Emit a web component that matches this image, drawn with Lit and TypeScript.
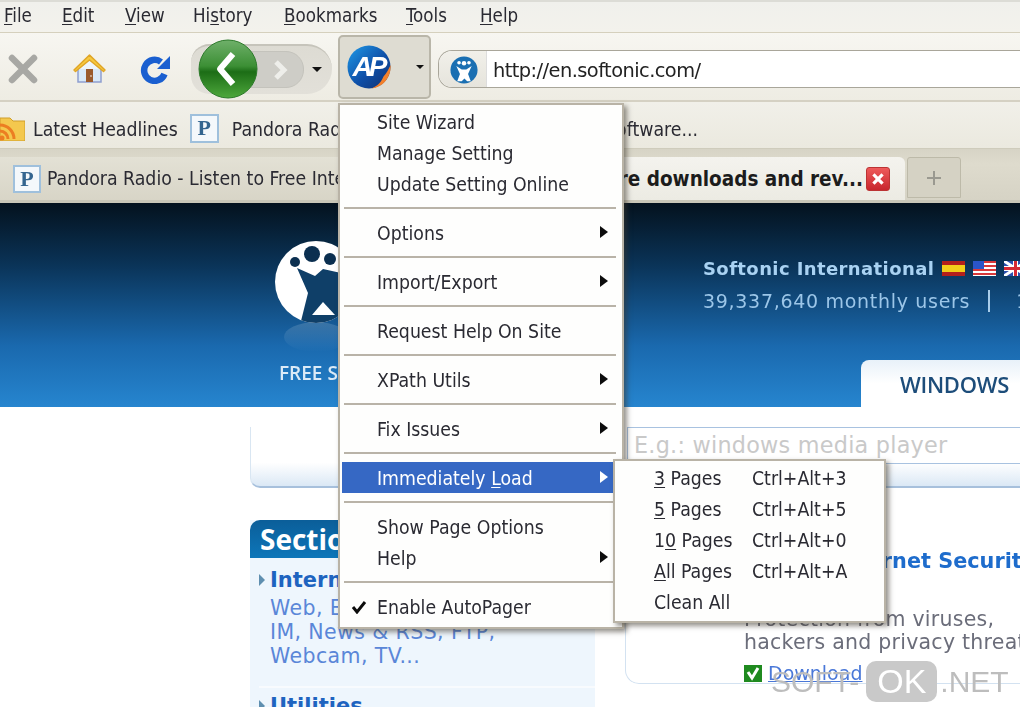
import { LitElement, html, css, svg } from "lit";
import { customElement } from "lit/decorators.js";

const pIcon = (s: number) => html`<span class="p" style="width:${s}px;height:${s}px">P</span>`;
const items: any[] = [
  ["Site Wizard"], ["Manage Setting"], ["Update Setting Online"], "-",
  ["Options", 1], "-", ["Import/Export", 1], "-", ["Request Help On Site"], "-",
  ["XPath Utils", 1], "-", ["Fix Issues", 1], "-",
  ["Immediately Load", 1, "hi"], "-", ["Show Page Options"], ["Help", 1], "-", ["Enable AutoPager", 0, "chk"],
];

@customElement("app-root")
export class AppRoot extends LitElement {
  static styles = css`
    :host { display: block; width: 1020px; height: 707px; overflow: hidden; background: #fff; }
    .shell { position: relative; width: 1020px; height: 707px; overflow: hidden; filter: blur(0.45px);
      font-family: "DejaVu Sans", sans-serif; font-stretch: condensed; font-size: 19.3px; color: #2a2a32; }
    u { text-underline-offset: 2px; }
    .menubar { height: 33px; box-sizing: border-box; border-top: 2px solid #dcdcd6; border-bottom: 1px solid #d5d0bd; font-size: 18.6px; padding: 0 0 3px 4px;
      background: linear-gradient(#f0f0ec, #f3f2ec); display: flex; align-items: center; }
    .nav { height: 69px; box-sizing: border-box; padding-top: 4px; background: linear-gradient(#f7f6f1, #eeece3); border-bottom: 2px solid #d5d1c3;
      display: flex; align-items: center; position: relative; }
    .ticon { flex: none; display: block; }
    .capsule { margin-left: 19px; width: 141px; height: 50px; box-sizing: border-box; border-top: 2px solid #c6c4bb; border-radius: 22px 30px 30px 22px; background: linear-gradient(#dddbd3, #e2e0d9);
      display: flex; align-items: center; position: relative; flex: none; }
    .back { margin-left: 7px; margin-top: -2px; flex: none; position: relative; z-index: 1; }
    .fwd { width: 54px; height: 37px; margin-left: -8px; border-radius: 0 18px 18px 0; background: #cecdc7; border: 1px solid #c4c3bc; box-sizing: border-box;
      display: flex; align-items: center; justify-content: center; padding-left: 6px; flex: none; }
    .drop { width: 0; height: 0; border-left: 5px solid transparent; border-right: 5px solid transparent; border-top: 5px solid #111; flex: none; }
    .capsule .drop { margin-left: 8px; }
    .ap { margin-left: 6px; width: 93px; height: 64px; box-sizing: border-box; flex: none; background: #dedcd2; border: 2px solid #b9b6a9; border-radius: 5px;
      display: flex; align-items: center; padding-left: 7px; margin-top: -4px; }
    .ap .drop { margin-left: 25px; border-left-width: 4px; border-right-width: 4px; border-top-width: 4px; }
    .url { margin-left: 7px; flex: 1; height: 38px; box-sizing: border-box; border: 1.5px solid #a9a69a; border-right: none; border-radius: 14px 0 0 14px; background: #fff;
      display: flex; align-items: center; overflow: hidden; }
    .ident { width: 48px; height: 100%; background: linear-gradient(#f1f0ea, #e6e4dc); display: flex; align-items: center; justify-content: flex-end; padding: 2px 7px 0 0; box-sizing: border-box; flex: none; border-right: 1px solid #ddd; }
    .urltext { margin-left: 6px; padding-top: 3px; font-stretch: normal; font-size: 19.4px; color: #222; letter-spacing: -0.55px; }
    .bm { height: 47px; box-sizing: border-box; padding-top: 6px; background: linear-gradient(#f1f0e9, #ebe9df); display: flex; align-items: center; border-bottom: 1px solid #cfccbc; }
    .bm .t1, .bm .t2, .bm .t3 { padding-top: 2px; }
    .bm .t1 { margin-left: 8px; }
    .bm .pi { margin-left: 12px; display: flex; }
    .bm .t2 { margin-left: 13px; }
    .bm .t3 { margin-left: auto; margin-right: 322px; }
    .p { display: inline-flex; align-items: center; justify-content: center; box-sizing: border-box; background: #f4f8fb; border: 2px solid #9fc0dc; color: #34658f;
      font-family: "Liberation Serif", serif; font-weight: bold; font-size: 22px; flex: none; }
    .tabs { height: 54px; box-sizing: border-box; background: linear-gradient(#d7d4c6, #dedbcd 30%, #d6d3c5); border-bottom: 3px solid #cac7b8; display: flex; align-items: flex-end; }
    .tab1 { width: 470px; height: 43px; box-sizing: border-box; padding: 0 0 0 13px; display: flex; align-items: center; gap: 6px; white-space: nowrap; overflow: hidden; background: linear-gradient(#e3e1d5, #d8d5c7); }
    .tab2 { width: 435px; height: 43px; box-sizing: border-box; display: flex; align-items: center; justify-content: flex-end; gap: 3px; padding: 0 15px 0 0; background: linear-gradient(#f4f3ee, #ecebe3); border-radius: 6px 6px 0 0; font-weight: bold; font-size: 20.5px; white-space: nowrap; color: #1c1c1c; }
    .x { width: 24px; height: 24px; border-radius: 3px; background: linear-gradient(#ee5a5a, #c8262e); border: 1px solid #b33; box-sizing: border-box; flex: none; display: block; }
    .tab3 { width: 54px; height: 41px; margin: 0 0 2px 2px; box-sizing: border-box; background: #d5d2c4; border: 1px solid #bdbaa9; border-radius: 3px 3px 0 0; display: flex; align-items: center; justify-content: center; }

    .hdr { height: 204px; background: linear-gradient(#04121e 0%, #0a3357 30%, #1a69ae 70%, #2685cf 100%); display: flex; font-stretch: normal; position: relative; }
    .logo { margin-left: 275px; width: 428px; flex: none; padding-top: 38px; box-sizing: border-box; }
    .logo svg { display: block; }
    .free { margin: 9px 0 0 4px; color: #dbeaf7; font-family: "Open Sans", sans-serif; font-weight: 600; font-size: 19px; white-space: nowrap; }
    .right { flex: 1; padding-top: 55px; display: flex; flex-direction: column; overflow: hidden; }
    .intl { color: #a9d2f2; font-weight: bold; font-size: 18px; letter-spacing: .4px; white-space: nowrap; display: flex; align-items: center; }
    .flag { display: block; flex: none; margin-left: 8px; }
    .users { margin-top: 11px; color: #9cc6e8; font-size: 19px; letter-spacing: .7px; white-space: nowrap; display: flex; align-items: center; }
    .bar { width: 2px; height: 22px; background: #a9cdea; margin: 0 26px 0 18px; flex: none; }
    .wintab { margin: auto 0 0 158px; height: 47px; flex: none; background: linear-gradient(#e8f1f9, #fff 50%); border-radius: 8px 0 0 0; padding: 9px 0 0 39px; box-sizing: border-box; color: #1d4d7a; font-size: 22px; font-family: "Open Sans", sans-serif; font-weight: 600; white-space: nowrap; letter-spacing: -.3px; }

    .search { margin: 20px 0 0 250px; height: 61px; border-radius: 0 0 0 10px; border-bottom: 2px solid #a7c0dc; border-left: 1px solid #d9e6f2; box-sizing: border-box;
      background: linear-gradient(#fff 60%, #dbe8f5); position: relative; display: flex; justify-content: flex-end; }
    .input { width: 393px; height: 37px; border: 1px solid #a8c2e0; border-right: none; box-sizing: border-box; background: #fff; color: #c9c9c9; padding-left: 6px; font-stretch: normal; font-size: 22.3px; line-height: 35px; white-space: nowrap; letter-spacing: .25px; }
    .bottom { display: flex; margin-left: 250px; font-stretch: normal; }
    .sec { margin-top: 32px; width: 345px; height: 200px; flex: none; background: #eef6fd; }
    .sechd { height: 38px; width: 120px; background: linear-gradient(#0b5e99, #0d76b9); border-radius: 10px 0 0 0; color: #fff; font-weight: bold; font-size: 28px; padding-left: 10px; box-sizing: border-box; line-height: 38px; font-family: "Open Sans", sans-serif; }
    .sect { padding: 10px 0 0 9px; }
    .st { display: flex; align-items: center; gap: 5px; color: #1e64c0; font-weight: bold; font-size: 21px; }
    .st i { width: 0; height: 0; border-left: 6px solid #5f8fb0; border-top: 6px solid transparent; border-bottom: 6px solid transparent; }
    .sl { color: #5a86d8; font-size: 20.5px; letter-spacing: .4px; line-height: 24px; margin: 4px 0 0 11px; white-space: nowrap; }
    .sep2 { height: 2px; background: #f8fbfe; margin: 18px 0 6px; }
    .card { margin: 0 0 0 30px; flex: 1; height: 196px; border: 1px solid #d3e2f1; border-top: none; border-right: none; border-radius: 0 0 0 14px; padding: 60px 0 0 118px; box-sizing: border-box; white-space: nowrap; overflow: hidden; }
    .ct { color: #1e6ccc; font-weight: bold; font-size: 20.8px; line-height: 27px; margin-left: 3px; }
    .cd { color: #6b6d7a; font-size: 20.5px; letter-spacing: .25px; line-height: 23px; margin-top: 33px; }
    .dl { display: flex; align-items: center; gap: 6px; margin-top: 8px; }
    .dl a { color: #4a78d8; text-decoration: underline; font-size: 19px; }

    .menu { position: absolute; left: 338px; top: 103px; width: 286px; box-sizing: border-box; background: #fefefd; border: 2px solid #b9b3a6; padding: 1px 0 5px; box-shadow: 3px 3px 5px rgba(60,55,45,.55); }
    .row { height: 31px; box-sizing: border-box; padding: 1px 0 0 35px; display: flex; align-items: center; margin: 0 8px 0 2px; position: relative; white-space: nowrap; }
    .row.hi { background: #3668c4; color: #fff; }
    .msep { height: 2px; background: #b9b3a8; margin: 8px 6px 8px 4px; }
    .arrow { position: absolute; right: 6px; top: 9px; width: 0; height: 0; border-left: 8px solid #0c0c0c; border-top: 6px solid transparent; border-bottom: 6px solid transparent; }
    .hi .arrow { border-left-color: #fff; }
    .chk { position: absolute; left: 9px; top: 9px; display: block; }
    .sub { position: absolute; left: 613px; top: 459px; width: 273px; height: 164px; box-sizing: border-box; background: #fefefd; border: 2px solid #b9b3a6; padding: 2px 0 0 39px; box-shadow: 3px 3px 5px rgba(60,55,45,.55);
      display: grid; grid-template-columns: 98px 1fr; grid-auto-rows: 31px; align-items: center; white-space: nowrap; }
    .wm { position: absolute; left: 771px; top: 661px; display: flex; align-items: center; font-family: "Liberation Sans", sans-serif; font-size: 30px; color: #bdbdbd; font-weight: 400; font-stretch: normal; }
    .ok { background: #c9c9c9; color: #fff; width: 71px; height: 41px; border-radius: 10px; display: flex; align-items: center; justify-content: center; margin: 0 3px 0 7px; font-size: 34px; }
  `;

  render() {
    const flagEs = html`<svg class="flag" width="23" height="15"><rect width="23" height="15" fill="#b3201c"/><rect y="4" width="23" height="7" fill="#f2cf1a"/></svg>`;
    const flagUs = html`<svg class="flag" width="23" height="15"><rect width="23" height="15" fill="#fff"/>${[0, 4, 8, 12].map((y) => svg`<rect y="${y}" width="23" height="2" fill="#d8383a"/>`)}<rect width="11" height="8" fill="#2a55c8"/></svg>`;
    const flagUk = html`<svg class="flag" width="23" height="15"><rect width="23" height="15" fill="#2b50b0"/><path d="M0 0L23 15M23 0L0 15" stroke="#fff" stroke-width="3"/><path d="M11.500 0V15M0 7.500H23" stroke="#fff" stroke-width="5"/><path d="M11.500 0V15M0 7.500H23" stroke="#d62a35" stroke-width="3"/></svg>`;
    return html`<div class="shell">
      <div class="menubar">
        <span style="width:58px"><u>F</u>ile</span><span style="width:63px"><u>E</u>dit</span><span style="width:68px"><u>V</u>iew</span><span style="width:91px">Hi<u>s</u>tory</span><span style="width:122px"><u>B</u>ookmarks</span><span style="width:74px"><u>T</u>ools</span><span><u>H</u>elp</span>
      </div>
      <div class="nav">
        <svg class="ticon" style="margin-left:8px" width="30" height="30" viewBox="0 0 30 30"><path d="M4 4L26 26M26 4L4 26" stroke="#a8a8a4" stroke-width="6.500" stroke-linecap="round"/></svg>
        <svg class="ticon" style="margin-left:34px" width="35" height="31" viewBox="0 0 35 31">
          <path d="M6 15v14h23V15" fill="#d9e9f7" stroke="#8f9fd0" stroke-width="1.500"/>
          <path d="M17.500 7L8 16h19z" fill="#eef5fb"/>
          <path d="M17.500 2L2 17l1.500 1.500L17.500 7l14 11.500L33 17z" fill="#f6c93f" stroke="#e0a526" stroke-width="1.500" stroke-linejoin="round"/>
          <rect x="14" y="16" width="7" height="13" fill="#9a5a2c"/><circle cx="19" cy="23" r=".8" fill="#fff"/>
        </svg>
        <svg class="ticon" style="margin-left:32px" width="33" height="30" viewBox="0 0 33 30">
          <path d="M25.500 20A10.500 10.500 0 1 1 22 8" fill="none" stroke="#1a5fd0" stroke-width="6.500"/><path d="M31 2v13H18z" fill="#1a5fd0"/></svg>
        <div class="capsule">
          <svg class="back" width="60" height="60" viewBox="0 0 60 60">
            <defs><linearGradient id="g" x1="0" y1="0" x2="0" y2="1"><stop offset="0" stop-color="#6fb06a"/><stop offset=".45" stop-color="#3c8f35"/><stop offset=".55" stop-color="#1c6d16"/><stop offset="1" stop-color="#4ea83c"/></linearGradient></defs>
            <circle cx="30" cy="30" r="29" fill="url(#g)" stroke="#2c7a2a"/><path d="M35 15L22 30l13 15" fill="none" stroke="#fff" stroke-width="6" stroke-linejoin="round"/></svg>
          <div class="fwd"><svg width="16" height="22" viewBox="0 0 16 22"><path d="M4 3l8 8-8 8" fill="none" stroke="#eeeeea" stroke-width="5"/></svg></div>
          <div class="drop"></div>
        </div>
        <div class="ap">
          <svg width="44" height="44" viewBox="0 0 44 44">
            <defs><linearGradient id="a" x1="0" y1="0" x2="1" y2="1"><stop offset="0" stop-color="#1f9be8"/><stop offset=".55" stop-color="#0e4fa8"/><stop offset="1" stop-color="#12306f"/></linearGradient></defs>
            <circle cx="22" cy="22" r="21.500" fill="url(#a)"/>
            <path d="M43.500 20a21.500 21.500 0 0 1-19 23.500c7-3 10-7 12-12 3-3 5-7 7-11.500z" fill="#f4802a"/>
            <text x="21" y="31" text-anchor="middle" fill="#fff" font-family="Liberation Sans" font-weight="bold" font-style="italic" font-size="28" letter-spacing="-4">AP</text>
          </svg>
          <div class="drop"></div>
        </div>
        <div class="url">
          <div class="ident"><svg width="30" height="28" viewBox="0 0 31 31"><ellipse cx="15.500" cy="15.500" rx="15" ry="15" fill="#1a6fb2"/><circle cx="15.500" cy="8" r="2.500" fill="#fff"/><circle cx="10" cy="7.500" r="2" fill="#fff"/><circle cx="21" cy="7.500" r="2" fill="#fff"/><path d="M7 11l6 4h5l6-4-4 9 3 8h-4l-3-3-3 3H8l3-8z" fill="#fff"/></svg></div>
          <span class="urltext">http://en.softonic.com/</span>
        </div>
      </div>
      <div class="bm">
        <svg class="ticon" width="25" height="26" viewBox="0 0 25 26"><path d="M0 3h10l3 3h12v20H0z" fill="#f4c84e" stroke="#cf9e2a"/><path d="M0 10a14 14 0 0 1 14 14M0 16a8 8 0 0 1 8 8" fill="none" stroke="#ec7e22" stroke-width="3"/><circle cx="2" cy="23" r="2.500" fill="#ec7e22"/></svg>
        <span class="t1">Latest Headlines</span>
        <span class="pi">${pIcon(29)}</span>
        <span class="t2">Pandora Radio</span>
        <span class="t3">Software...</span>
      </div>
      <div class="tabs">
        <div class="tab1">${pIcon(28)}<span>Pandora Radio - Listen to Free Internet Radio</span></div>
        <div class="tab2"><span>free software downloads and rev...</span>
          <svg class="x" viewBox="0 0 24 24"><path d="M7 7l10 10M17 7L7 17" stroke="#fff" stroke-width="3.500"/></svg></div>
        <div class="tab3"><svg width="14" height="14" viewBox="0 0 14 14"><path d="M7 0v14M0 7h14" stroke="#9a9990" stroke-width="2"/></svg></div>
      </div>
      <div class="hdr">
        <div class="logo">
          <svg width="66" height="110" viewBox="0 0 66 110">
            <defs>
              <linearGradient id="r" x1="0" y1="0" x2="0" y2="1"><stop offset="0" stop-color="#fff" stop-opacity=".16"/><stop offset="1" stop-color="#fff" stop-opacity="0"/></linearGradient>
              <clipPath id="c"><circle cx="41" cy="41" r="41"/></clipPath>
            </defs>
            <ellipse cx="41" cy="96" rx="32" ry="15" fill="url(#r)"/>
            <circle cx="41" cy="41" r="41" fill="#fff"/>
            <g clip-path="url(#c)">
              <path d="M22 27L40 35l8-7 18 4V84H25L33 52z" fill="#0f3f68"/>
              <path d="M48 61L37 74h23z" fill="#fff"/>
            </g>
            <circle cx="37" cy="13" r="8" fill="#0b2f50"/><circle cx="20" cy="21" r="5" fill="#0b2f50"/><circle cx="55" cy="18" r="6" fill="#0b2f50"/>
          </svg>
          <div class="free">FREE SOFTWARE</div>
        </div>
        <div class="right">
          <div class="intl">Softonic International ${flagEs}${flagUs}${flagUk}</div>
          <div class="users">39,337,640 monthly users<span class="bar"></span>1</div>
          <div class="wintab">WINDOWS</div>
        </div>
      </div>
      <div class="search"><div class="input">E.g.: windows media player</div></div>
      <div class="bottom">
        <div class="sec">
          <div class="sechd">Sections</div>
          <div class="sect">
            <div class="st"><i></i>Internet</div>
            <div class="sl">Web, E-mail, Chat,<br />IM, News &amp; RSS, FTP,<br />Webcam, TV...</div>
            <div class="sep2"></div>
            <div class="st"><i></i>Utilities</div>
          </div>
        </div>
        <div class="card">
          <div class="ct">Norton Internet Security</div>
          <div class="cd">Protection from viruses,<br />hackers and privacy threats</div>
          <div class="dl"><svg width="18" height="17" viewBox="0 0 18 17"><rect width="18" height="17" fill="#1f8a1f"/><path d="M4 7l4 6 6-10" fill="none" stroke="#fff" stroke-width="3"/></svg><a>Download</a></div>
        </div>
      </div>

      <div class="menu">
        ${items.map((i) => i === "-" ? html`<div class="msep"></div>` : html`<div class="row ${i[2] === "hi" ? "hi" : ""}">
          ${i[2] === "chk" ? html`<svg class="chk" width="16" height="14" viewBox="0 0 16 14"><path d="M2 7l4 5 8-10" fill="none" stroke="#0c0c0c" stroke-width="3"/></svg>` : ""}
          ${i[2] === "hi" ? html`<span>Immediately <u>L</u>oad</span>` : i[0]}
          ${i[1] ? html`<span class="arrow"></span>` : ""}
        </div>`)}
      </div>
      <div class="sub">
        <span><u>3</u> Pages</span><span>Ctrl+Alt+3</span>
        <span><u>5</u> Pages</span><span>Ctrl+Alt+5</span>
        <span>1<u>0</u> Pages</span><span>Ctrl+Alt+0</span>
        <span><u>A</u>ll Pages</span><span>Ctrl+Alt+A</span>
        <span>Clean All</span><span></span>
      </div>
      <div class="wm">SOFT-<span class="ok">OK</span>.NET</div>
    </div>`;
  }
}
